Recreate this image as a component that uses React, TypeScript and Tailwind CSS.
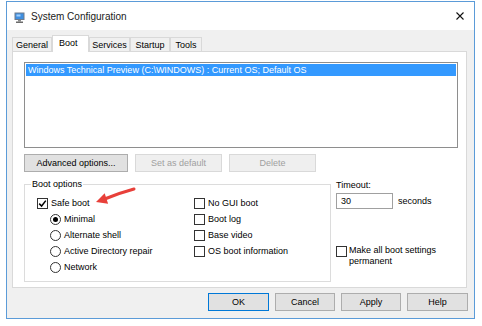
import React from 'react'

function Check({ checked }: { checked?: boolean }) {
  return (
    <span className="w-[11px] h-[11px] border border-[#333333] bg-white flex items-center justify-center shrink-0">
      {checked && (
        <svg viewBox="0 0 9 9" className="w-[9px] h-[9px]">
          <path d="M1.2 4.6 L3.6 7 L7.8 1.6" stroke="#000" strokeWidth="1.5" fill="none" />
        </svg>
      )}
    </span>
  )
}

function Radio({ checked }: { checked?: boolean }) {
  return (
    <span className="w-[11px] h-[11px] rounded-full border border-[#333333] bg-white flex items-center justify-center shrink-0">
      {checked && <span className="w-[5px] h-[5px] rounded-full bg-black" />}
    </span>
  )
}

function Row({ children, label, indent }: { children: React.ReactNode; label: string; indent?: boolean }) {
  return (
    <div className={`h-[16px] flex items-center gap-[3px] ${indent ? 'pl-[13px]' : ''}`}>
      {children}
      <span className="whitespace-nowrap">{label}</span>
    </div>
  )
}

function Btn({ label, w, disabled, primary }: { label: string; w: string; disabled?: boolean; primary?: boolean }) {
  return (
    <div
      className={`${w} h-[18px] flex items-center justify-center border ${
        disabled
          ? 'bg-[#efefef] border-[#d9d9d9] text-[#a0a0a0]'
          : primary
            ? 'bg-[#e1e1e1] border-[#0078d7]'
            : 'bg-[#e1e1e1] border-[#adadad]'
      }`}
    >
      {label}
    </div>
  )
}

const TABS = [
  { name: 'General', w: 'w-[40px]' },
  { name: 'Boot', w: 'w-[37px]' },
  { name: 'Services', w: 'w-[41px]' },
  { name: 'Startup', w: 'w-[40px]' },
  { name: 'Tools', w: 'w-[32px]' },
]

export default function App() {
  return (
    <div className="relative w-[482px] h-[326px] bg-white pt-px pl-[6px] font-['Liberation_Sans',Arial,sans-serif] text-[9px] text-black leading-none">
      <div className="w-[469px] h-[318px] border border-[#5b9bd8] flex flex-col bg-[#f0f0f0]">
        {/* Title bar */}
        <div className="h-[28px] shrink-0 bg-white flex items-center pl-[7px] pr-[10px] pt-[2px]">
          <svg viewBox="0 0 11 11" className="w-[11px] h-[11px] mr-[6px]">
            <rect x="0.5" y="0.5" width="10" height="7.5" fill="#6f7b8c" />
            <rect x="1.5" y="1.5" width="8" height="5.5" fill="#3f8fe0" />
            <rect x="2.5" y="2.5" width="4" height="2" fill="#9fd0ff" />
            <rect x="4" y="8" width="3" height="1.5" fill="#8a8a8a" />
            <rect x="2" y="9.5" width="7" height="1.5" fill="#6b6b6b" />
          </svg>
          <span className="text-[10px] text-[#1a1a1a]">System Configuration</span>
          <svg viewBox="0 0 8 8" className="w-[8px] h-[8px] ml-auto -mt-[2px]">
            <path d="M0.5 0.5 L7.5 7.5 M7.5 0.5 L0.5 7.5" stroke="#111" strokeWidth="1.1" />
          </svg>
        </div>

        {/* Body */}
        <div className="flex-1 flex flex-col pt-[5px] pl-[5px] pr-[7px]">
          {/* Tabs */}
          <div className="flex items-end h-[16px]">
            {TABS.map((t) =>
              t.name === 'Boot' ? (
                <div
                  key={t.name}
                  className={`${t.w} h-[17px] -mb-px relative z-10 bg-white border border-b-0 border-[#d9d9d9] pl-[6px] pt-[3px]`}
                >
                  {t.name}
                </div>
              ) : (
                <div
                  key={t.name}
                  className={`${t.w} h-[14px] bg-[#f0f0f0] border border-b-0 border-[#d9d9d9] flex items-center justify-center pt-[1px]`}
                >
                  {t.name}
                </div>
              ),
            )}
          </div>

          {/* Tab panel */}
          <div className="w-[455px] h-[237px] bg-white border border-[#d9d9d9] pt-[10px] pl-[11px] pr-[8px]">
            <div className="w-[434px] h-[86px] border border-[#8e8e8e] p-px">
              <div className="h-[12px] bg-[#3399ff] text-white flex items-center pl-[2px]">
                Windows Technical Preview (C:\WINDOWS) : Current OS; Default OS
              </div>
            </div>

            <div className="flex gap-[7px] mt-[6px]">
              <Btn label="Advanced options..." w="w-[104px]" />
              <Btn label="Set as default" w="w-[87px]" disabled />
              <Btn label="Delete" w="w-[87px]" disabled />
            </div>

            <div className="flex mt-[12px] gap-[5px]">
              {/* Boot options group */}
              <div className="w-[307px] h-[98px] border border-[#dcdcdc] pl-[12px]">
                <div className="-mt-[6px] -ml-[6px] px-px bg-white w-fit leading-[10px]">Boot options</div>
                <div className="flex mt-[6px]">
                  <div className="w-[157px] flex flex-col">
                    <Row label="Safe boot">
                      <Check checked />
                    </Row>
                    <Row label="Minimal" indent>
                      <Radio checked />
                    </Row>
                    <Row label="Alternate shell" indent>
                      <Radio />
                    </Row>
                    <Row label="Active Directory repair" indent>
                      <Radio />
                    </Row>
                    <Row label="Network" indent>
                      <Radio />
                    </Row>
                  </div>
                  <div className="flex flex-col">
                    <Row label="No GUI boot">
                      <Check />
                    </Row>
                    <Row label="Boot log">
                      <Check />
                    </Row>
                    <Row label="Base video">
                      <Check />
                    </Row>
                    <Row label="OS boot information">
                      <Check />
                    </Row>
                  </div>
                </div>
              </div>

              {/* Timeout */}
              <div className="flex flex-col -mt-[4px]">
                <div className="leading-[10px]">Timeout:</div>
                <div className="flex items-center gap-[5px] mt-[3px]">
                  <div className="w-[57px] h-[16px] border border-[#a0a0a0] bg-white flex items-center pl-[4px]">30</div>
                  <span>seconds</span>
                </div>
                <div className="flex items-start gap-[2px] mt-[37px]">
                  <Check />
                  <span className="w-[100px] leading-[11px] -mt-px">Make all boot settings permanent</span>
                </div>
              </div>
            </div>
          </div>

          {/* Dialog buttons */}
          <div className="flex justify-end gap-[6px] mt-[5px] -mr-px">
            <Btn label="OK" w="w-[61px]" primary />
            <Btn label="Cancel" w="w-[60px]" />
            <Btn label="Apply" w="w-[60px]" />
            <Btn label="Help" w="w-[61px]" />
          </div>
        </div>
      </div>

      {/* Red annotation arrow */}
      <svg className="absolute left-[92px] top-[185px] w-[45px] h-[22px]" viewBox="0 0 45 22">
        <path d="M42 4 Q29 7.5 14 13.5" stroke="#e8403a" strokeWidth="3" fill="none" strokeLinecap="round" />
        <path d="M4 17 L16.1 18.7 L12.7 8.3 Z" fill="#e8403a" />
      </svg>
    </div>
  )
}
